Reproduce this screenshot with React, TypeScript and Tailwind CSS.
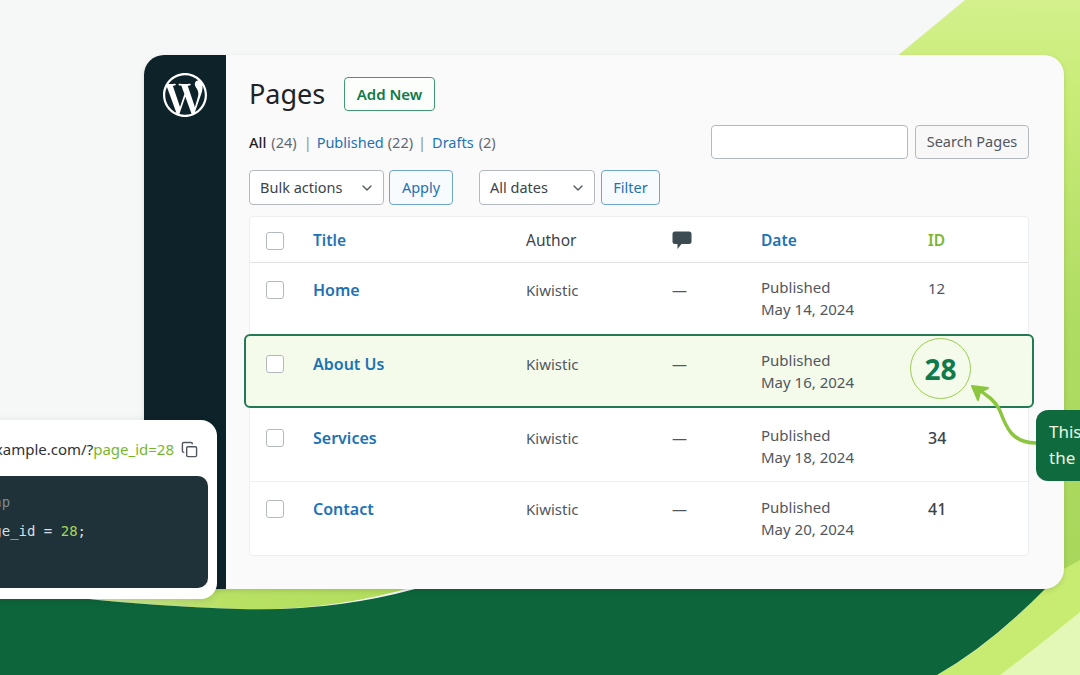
import React from 'react'
import { SiWordpress } from 'react-icons/si'
import { ChevronDown, Copy } from 'lucide-react'

const rows = [
  { title: 'Home', date: 'May 14, 2024', id: '12', row: 'h-[72px] pt-[13px]', shift: 'mt-[3px]' },
  { title: 'About Us', date: 'May 16, 2024', id: '28', row: 'h-[74px] pt-[13px]', shift: 'mt-[4px]', active: true },
  { title: 'Services', date: 'May 18, 2024', id: '34', row: 'h-[75px] pt-[17px]', shift: 'mt-[3px]' },
  { title: 'Contact', date: 'May 20, 2024', id: '41', row: 'h-[73px] pt-[14px]', shift: 'mt-[2px]' },
]

const gridCols = 'grid grid-cols-[63px_213px_146px_89px_167px_1fr]'
const blue = 'text-[#1d72b5]'

function Checkbox() {
  return <span className="block w-[18px] h-[18px] ml-[16px] rounded-[3px] border border-[#b4b9be] bg-white" />
}

function Background() {
  return (
    <svg className="absolute inset-0" width="1080" height="675" viewBox="0 0 1080 675">
      <defs>
        <linearGradient id="lime" x1="0" y1="0" x2="0" y2="1">
          <stop offset="0" stopColor="#d3f08c" />
          <stop offset="0.15" stopColor="#c9ec78" />
          <stop offset="0.55" stopColor="#aedb62" />
          <stop offset="1" stopColor="#a8d65b" />
        </linearGradient>
        <linearGradient id="crescent" x1="0" y1="0" x2="1" y2="0">
          <stop offset="0" stopColor="#d6ebab" />
          <stop offset="0.45" stopColor="#b9e265" />
          <stop offset="1" stopColor="#b0dc5c" />
        </linearGradient>
      </defs>
      <rect width="1080" height="675" fill="#f6f7f7" />
      <path d="M965 0 L1080 0 L1080 600 L850 600 L850 95 Z" fill="url(#lime)" />
      <path d="M937 675 Q1000 640 1062 570 L1080 560 L1080 675 Z" fill="#c8ec72" />
      <path d="M1000 675 Q1040 645 1080 612 L1080 675 Z" fill="#e3f8b6" />
      <path d="M60 585 L420 585 Q330 612 240 609 Q150 606 80 598 Z" fill="url(#crescent)" />
      <path
        d="M0 598 L80 598 Q150 606 240 609 Q330 612 415 589 L1045 589 Q990 645 937 675 L0 675 Z"
        fill="#0d663b"
      />
    </svg>
  )
}

function Sidebar() {
  return (
    <div className="w-[82px] shrink-0 bg-[#0d2229] flex justify-center pt-[18px]">
      <SiWordpress className="text-white" size={44} />
    </div>
  )
}

function Toolbar() {
  return (
    <>
      <div className="flex items-center h-[34px]">
        <h1 className="text-[27px] leading-none text-[#1d2327] w-[95px] -mt-[1px]">Pages</h1>
        <button className="w-[91px] h-[34px] rounded-[4px] border border-[#3f9a73] bg-[#fbfefb] text-[15px] font-semibold text-[#0f7a4a]">
          Add New
        </button>
      </div>
      <div className="flex items-center justify-between h-[33px] mt-[14px]">
        <div className="pt-[2px] text-[14.5px] text-[#646970] flex items-center">
          <span className="text-[#1d2327] font-medium">All</span>
          <span className="ml-[5px]">(24)</span>
          <span className="ml-[7px] mr-[5px] text-[#8c8f94]">|</span>
          <span className={blue}>Published</span>
          <span className="ml-[4px]">(22)</span>
          <span className="ml-[5px] mr-[6px] text-[#8c8f94]">|</span>
          <span className={blue}>Drafts</span>
          <span className="ml-[5px]">(2)</span>
        </div>
        <div className="flex gap-[7px]">
          <div className="w-[197px] h-[34px] rounded-[4px] border border-[#b4b9be] bg-white" />
          <button className="w-[114px] h-[34px] rounded-[4px] border border-[#b4b9be] bg-[#f8f8f8] text-[14.5px] text-[#50575e]">
            Search Pages
          </button>
        </div>
      </div>
      <div className="flex items-center h-[35px] mt-[12px] text-[14.5px]">
        <div className="w-[135px] h-[35px] rounded-[4px] border border-[#b4b9be] bg-white flex items-center justify-between pl-[10px] pr-[8px] text-[#3c434a]">
          Bulk actions
          <ChevronDown size={16} className="text-[#50575e]" />
        </div>
        <button className={`w-[64px] h-[35px] ml-[5px] rounded-[4px] border border-[#6fa5cf] bg-[#f8fbfd] ${blue}`}>
          Apply
        </button>
        <div className="w-[116px] h-[35px] ml-[26px] rounded-[4px] border border-[#b4b9be] bg-white flex items-center justify-between pl-[10px] pr-[8px] text-[#3c434a]">
          All dates
          <ChevronDown size={16} className="text-[#50575e]" />
        </div>
        <button className={`w-[59px] h-[35px] ml-[6px] rounded-[4px] border border-[#6fa5cf] bg-[#f8fbfd] ${blue}`}>
          Filter
        </button>
      </div>
    </>
  )
}

function PagesTable() {
  return (
    <div className="mt-[11px] rounded-[4px] border border-[#eceef0] bg-white">
      <div className={`${gridCols} items-center h-[46px] pt-[2px] border-b border-[#e0e2e4] text-[15.5px]`}>
        <Checkbox />
        <span className={`font-semibold ${blue}`}>Title</span>
        <span className="text-[#3c434a]">Author</span>
        <svg width="20" height="19" viewBox="0 0 20 19" className="mt-[-1px]">
          <path
            d="M3 0.5 H17 Q19.5 0.5 19.5 3 V10.5 Q19.5 13 17 13 H9.5 L5.5 18 V13 H3 Q0.5 13 0.5 10.5 V3 Q0.5 0.5 3 0.5 Z"
            fill="#3c4a52"
          />
        </svg>
        <span className={`font-semibold ${blue}`}>Date</span>
        <span className="font-semibold text-[#7ab532]">ID</span>
      </div>
      {rows.map((row) =>
        row.active ? (
          <div
            key={row.title}
            className={`${gridCols} relative z-10 ${row.row} -mx-[6px] px-[4px] -my-px rounded-[6px] border-2 border-[#237a56] bg-[#f4fbeb] text-[15px] text-[#50575e]`}
          >
            <RowCells row={row} />
          </div>
        ) : (
          <div
            key={row.title}
            className={`${gridCols} ${row.row} border-b border-[#eceef0] last:border-b-0 text-[15px] text-[#50575e]`}
          >
            <RowCells row={row} />
          </div>
        ),
      )}
    </div>
  )
}

function RowCells({ row }: { row: (typeof rows)[number] }) {
  return (
    <>
      <div className={`${row.shift} h-[22px] flex items-center`}>
        <Checkbox />
      </div>
      <span className={`${row.shift} leading-[22px] text-[16px] font-semibold ${blue}`}>{row.title}</span>
      <span className={`${row.shift} leading-[22px]`}>Kiwistic</span>
      <span className={`${row.shift} leading-[22px]`}>—</span>
      <span className="leading-[22px]">
        Published
        <br />
        {row.date}
      </span>
      {row.active ? (
        <span className="w-[61px] h-[61px] -ml-[18px] -mt-[11px] rounded-full border-[1.5px] border-[#9ccc54] flex items-center justify-center text-[28px] font-bold text-[#0f7a4a]">
          {row.id}
        </span>
      ) : row.id === '12' ? (
        <span className="mt-[1px] leading-[22px] text-[#50575e]">{row.id}</span>
      ) : (
        <span className={`${row.shift} leading-[22px] text-[16px] font-medium text-[#3c434a]`}>{row.id}</span>
      )}
    </>
  )
}

function CodeCard() {
  return (
    <div className="absolute left-[-49px] top-[420px] w-[266px] h-[179px] rounded-[16px] bg-white shadow-[0_2px_10px_rgba(0,0,0,0.12)] p-[9px] pt-0 flex flex-col">
      <div className="h-[56px] pt-[2px] flex items-center justify-end pr-[10px] text-[15px] text-[#2c3338] whitespace-nowrap">
        <span>example.com/?</span>
        <span className="text-[#76b82a]">page_id=28</span>
        <Copy size={17} className="ml-[7px] text-[#50575e]" />
      </div>
      <div className="h-[112px] rounded-[10px] bg-[#1f3239] pl-[8px] pt-[12px] font-['DejaVu_Sans_Mono',monospace] text-[14px] leading-[29px] text-[#d8dee0]">
        <div className="text-[#7d8a90]">&lt;?php</div>
        <div>
          $page_id = <span className="text-[#a8d65b]">28</span>;
        </div>
      </div>
    </div>
  )
}

function Callout() {
  return (
    <>
      <svg className="absolute left-[960px] top-[375px]" width="90" height="80" viewBox="0 0 90 80">
        <path d="M76 68 C52 68 46 52 40 36 C36 27 26 18 16 14" fill="none" stroke="#8cc63f" strokeWidth="3.5" strokeLinecap="round" />
        <path d="M12 11 L28 13 L20 17 L18 25 Z" fill="#8cc63f" stroke="#8cc63f" strokeWidth="2" strokeLinejoin="round" />
      </svg>
      <div className="absolute left-[1036px] top-[410px] w-[120px] h-[71px] rounded-[12px] bg-[#0f6b3e] pl-[13px] pt-[9px] text-[17px] leading-[26px] text-[#eaf6e0] whitespace-nowrap">
        This is
        <br />
        the page ID
      </div>
    </>
  )
}

export default function App() {
  return (
    <div className="relative w-[1080px] h-[675px] overflow-hidden font-['Noto_Sans',sans-serif]">
      <Background />
      <div className="relative isolate ml-[144px] mt-[55px] w-[920px] h-[534px] inline-flex rounded-[20px] overflow-hidden bg-[#fafafa] align-top shadow-[0_2px_5px_rgba(0,0,0,0.12)]">
        <Sidebar />
        <div className="flex-1 pl-[23px] pr-[35px] pt-[22px]">
          <Toolbar />
          <PagesTable />
        </div>
      </div>
      <CodeCard />
      <Callout />
    </div>
  )
}
